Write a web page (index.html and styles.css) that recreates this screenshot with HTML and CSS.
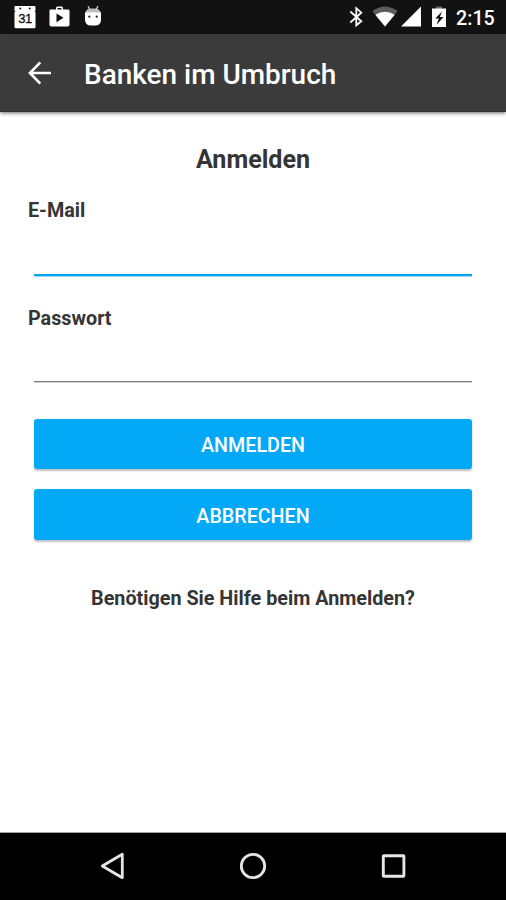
FILE: index.html
```html
<!DOCTYPE html>
<html lang="de">
<head>
<meta charset="utf-8">
<title>Banken im Umbruch</title>
<link rel="stylesheet" href="styles.css">
</head>
<body>
<div class="screen">
  <div class="status-bar">
    <div class="notifications">
      <svg width="22" height="23" viewBox="0 0 22 23"><path fill="#fff" d="M1.500 0h19q1 0 1 1v3.500l-.8.700.8 1V21q0 1.200-1.200 1.200H1.700Q.5 22.200.5 21V6.200l.8-1-.8-.7V1q0-1 1-1z"/><circle cx="6.300" cy="2.400" r="1" fill="#111"/><circle cx="15.700" cy="2.400" r="1" fill="#111"/><text class="day" x="10.900" y="17.300" text-anchor="middle">31</text></svg>
      <svg width="22" height="23" viewBox="0 0 22 23"><path fill="#fff" d="M7 3.500V2q0-1.500 1.500-1.500h4Q14 .5 14 2v1.500h5.200q1.300 0 1.300 1.300v14q0 1.700-1.700 1.700H2.200Q.5 20.500.5 18.800v-14q0-1.300 1.300-1.300zm1.500 0h4V2h-4z"/><path fill="#111" d="M7.500 7.500v8.700l7-4.400z"/></svg>
      <svg width="18" height="23" viewBox="0 0 18 23"><path d="M4 0l1.800 3.500M14 0l-1.800 3.500" stroke="#ddd" stroke-width="1.200"/><path fill="#bbb" d="M1.200 7Q2 3 6 2.500h6q4 .5 4.800 4.500z"/><path fill="#fff" d="M1 6.500l8-.3 8 .3v7q0 6-6 6H7q-6 0-6-6z"/><circle cx="5.300" cy="10.700" r="1.100" fill="#222"/><circle cx="12.700" cy="10.700" r="1.100" fill="#222"/></svg>
    </div>
    <div class="system">
      <svg class="bluetooth" width="15" height="23" viewBox="0 0 15 23"><path fill="none" stroke="#fff" stroke-width="1.800" d="M1.300 5.500l11 9.800L7.300 19.300V2.200l5 4.500L1.300 16.500"/></svg>
      <svg class="wifi" width="26" height="22" viewBox="0 0 26 22"><path fill="#5c5c5c" d="M.4 5Q13-4 25.600 5L13 20.500z"/><path fill="#fff" d="M3.300 8.700Q13 2.800 22.700 8.700L13 20.500z"/></svg>
      <svg class="signal" width="20" height="22" viewBox="0 0 20 22"><path fill="#fff" d="M20 .5v20H0z"/></svg>
      <svg class="battery" width="14" height="22" viewBox="0 0 14 22"><path fill="#666" d="M4 .5h6V3H4z"/><path fill="#fff" d="M0 2.500h14v18.500H0z"/><path fill="#111" d="M10 5.500l-6.800 7H6.800l-2.200 6.300 6.900-7.800H7.800z"/></svg>
      <span class="clock">2:15</span>
    </div>
  </div>
  <header class="app-bar">
    <svg class="back" width="24" height="24" viewBox="0 0 24 24"><path fill="none" stroke="#fff" stroke-width="2.600" d="M12.300 1.300L1.900 12l10.400 10.700M2 12h21"/></svg>
    <span class="title">Banken im Umbruch</span>
  </header>
  <main class="content">
    <h1 class="heading">Anmelden</h1>
    <label class="label" for="email">E-Mail</label>
    <input class="field field-active" id="email" type="email">
    <label class="label label-password" for="password">Passwort</label>
    <input class="field" id="password" type="password">
    <button class="button button-login">ANMELDEN</button>
    <button class="button button-cancel">ABBRECHEN</button>
    <p class="help">Benötigen Sie Hilfe beim Anmelden?</p>
  </main>
  <nav class="nav-bar">
    <svg width="28" height="28" viewBox="0 0 28 28"><path fill="none" stroke="#e6e6e6" stroke-width="2.800" stroke-linejoin="round" d="M23.300 2.300v23.400L3.300 14z"/></svg>
    <svg width="28" height="28" viewBox="0 0 28 28"><circle cx="14" cy="14" r="11.700" fill="none" stroke="#e6e6e6" stroke-width="2.800"/></svg>
    <svg width="28" height="28" viewBox="0 0 28 28"><rect x="4.300" y="3.700" width="20.600" height="20.600" rx=".5" fill="none" stroke="#e6e6e6" stroke-width="2.900"/></svg>
  </nav>
</div>
</body>
</html>
```
FILE: styles.css
```css
* { box-sizing: border-box; }

body {
  margin: 0;
  font-family: Roboto, "Liberation Sans", sans-serif;
  color: #353535;
}

svg { display: block; flex: none; }

.screen {
  display: flex;
  flex-direction: column;
  width: 506px;
  height: 900px;
  background: #fff;
  overflow: hidden;
}

.status-bar {
  display: flex;
  justify-content: space-between;
  height: 34px;
  padding: 6px 10px 0 14px;
  background: #121212;
  color: #fff;
}

.notifications { display: flex; gap: 13px; }

.day { font: 500 13px "Liberation Sans", sans-serif; letter-spacing: -.5px; fill: #111; stroke: #111; stroke-width: .3px; }

.system { display: flex; }
.wifi { margin-left: 8px; }
.signal { margin-left: 3px; }
.battery { margin-left: 11px; }

.clock {
  width: 40px;
  margin-left: 10px;
  font-size: 19.700px;
  font-weight: 500;
  line-height: 25px;
  white-space: nowrap;
}

.app-bar {
  display: flex;
  align-items: center;
  height: 78px;
  padding: 0 28px;
  background: #3b3b3b;
  color: #fff;
  border-bottom: 1px solid #303030;
  box-shadow: 0 1px 4px rgba(0, 0, 0, .6);
}

.title {
  margin-left: 32px;
  padding-top: 4px;
  font-size: 27.950px;
  font-weight: 500;
  line-height: 34px;
}

.content {
  flex: 1;
  display: flex;
  flex-direction: column;
  padding: 33px 34px 0;
}

.heading {
  margin: 0;
  font-size: 25.100px;
  font-weight: 700;
  line-height: 30px;
  text-align: center;
}

.label {
  margin: 24px 0 0 -6px;
  font-size: 19.750px;
  font-weight: 700;
  line-height: 24px;
}

.label-password { margin-top: 31px; }

.field {
  height: 53px;
  padding: 0 0 8px;
  border: 0;
  border-bottom: 1px solid #7c7c7c;
  background: none;
  box-shadow: 0 1px #d2d2d2;
  font: 25px Roboto, sans-serif;
  outline: none;
}

.label-password + .field { height: 51px; }

.field-active {
  border-bottom: 2px solid #03a5f3;
  box-shadow: 0 1px #9bdafb;
}

.button {
  flex: none;
  height: 50px;
  padding: 2px 0 0;
  border: 0;
  border-radius: 3px;
  background: #03a9f6;
  box-shadow: 0 2px 2px rgba(0, 0, 0, .25);
  color: #fff;
  font: 500 19.700px Roboto, sans-serif;
}

.button-login { margin: 37px 0 0; }
.button-cancel { height: 51px; margin: 20px 0 0; padding-top: 3px; }

.help {
  margin: 47px 0 0;
  font-size: 19.750px;
  font-weight: 700;
  line-height: 24px;
  text-align: center;
}

.nav-bar {
  display: flex;
  justify-content: space-between;
  height: 68px;
  padding: 19px 99px 0;
  border-top: 1px solid #a0a0a0;
  background: #000;
}
```
